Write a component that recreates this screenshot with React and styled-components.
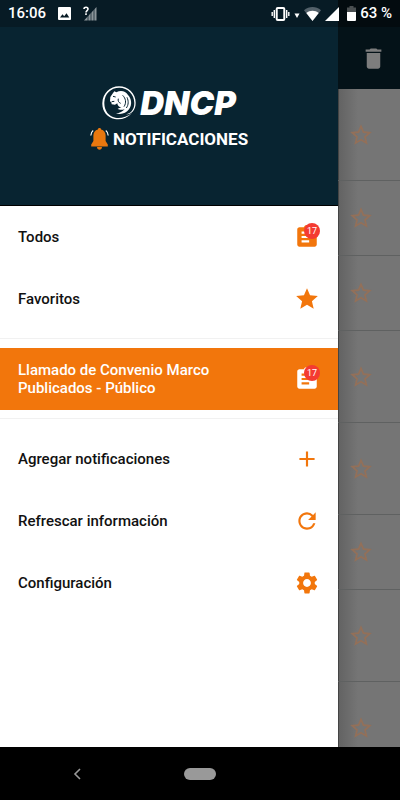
import React from "react";
import styled, { createGlobalStyle, css } from "styled-components";
import {
  MdAdd,
  MdAssignment,
  MdDelete,
  MdRefresh,
  MdSettings,
  MdStar,
  MdStarBorder,
} from "react-icons/md";

const GlobalStyle = createGlobalStyle`
  * {
    box-sizing: border-box;
  }
  body {
    margin: 0;
    background: #000;
    font-family: Roboto, "Liberation Sans", sans-serif;
  }
  button {
    border: 0;
    padding: 0;
    background: none;
    font: inherit;
    color: inherit;
    text-align: left;
    cursor: pointer;
  }
  svg {
    display: block;
    flex: none;
  }
`;

const Screen = styled.div`
  --strip: 62px;
  display: flex;
  flex-direction: column;
  height: 100vh;
  overflow: hidden;
`;

const StatusBar = styled.header`
  display: flex;
  justify-content: space-between;
  flex: none;
  height: 27px;
  padding: 0 8px;
  background: linear-gradient(
    to right,
    #071b25 calc(100% - var(--strip)),
    #030b0f calc(100% - var(--strip))
  );
  color: #fff;
  font-size: 15px;
  font-weight: 500;
  line-height: 27px;
`;

const StatusGroup = styled.div`
  display: flex;
  align-items: center;
  gap: ${(props) => props.$gap}px;
`;

const Body = styled.div`
  display: flex;
  flex: 1;
  min-height: 0;
`;

const Drawer = styled.aside`
  flex: 1;
  min-width: 0;
  background: #fff;
`;

const Brand = styled.div`
  display: flex;
  flex-direction: column;
  align-items: center;
  gap: 7px;
  height: 179px;
  padding-top: 59px;
  background: #082431;
  border-bottom: 1px solid #000;
  color: #fff;
`;

const BrandRow = styled.div`
  display: flex;
  align-items: center;
  gap: 4px;
`;

const BrandName = styled.span`
  font-family: Inter, sans-serif;
  font-size: 33px;
  font-style: italic;
  font-weight: 900;
  line-height: 34px;
`;

const BrandProduct = styled.span`
  font-size: 17px;
  font-weight: 700;
  line-height: 24px;
`;

const Menu = styled.nav`
  display: flex;
  flex-direction: column;
`;

const MenuItem = styled.button`
  display: flex;
  align-items: center;
  justify-content: space-between;
  gap: 48px;
  height: 62px;
  padding: 0 18px;
  font-size: 15px;
  font-weight: 500;
  line-height: 18px;
  color: #111;
  svg {
    color: #f2760c;
  }
  ${(props) =>
    props.$active &&
    css`
      && {
        background: #f2760c;
        color: #fff;
      }
      svg {
        color: #fff;
      }
    `}
`;

const Divider = styled.hr`
  width: 100%;
  height: 1px;
  margin: 8px 0 9px;
  border: 0;
  background: #f1f1f1;
`;

const IconBox = styled.span`
  position: relative;
  flex: none;
`;

const Badge = styled.span`
  position: absolute;
  top: -1px;
  right: 0;
  width: 16px;
  height: 16px;
  border-radius: 50%;
  background: #f43b32;
  color: #fff;
  font-size: 9px;
  font-weight: 400;
  line-height: 16px;
  text-align: center;
`;

const Behind = styled.main`
  flex: none;
  width: var(--strip);
  overflow: hidden;
  background: linear-gradient(to right, #444 1px, #636363 1px, #757575 20px);
`;

const AppBar = styled.div`
  display: flex;
  justify-content: flex-end;
  align-items: center;
  height: 62px;
  padding-right: 13px;
  background: #041218;
  color: #7d7d7d;
`;

const ListRow = styled.div`
  display: flex;
  align-items: center;
  height: ${(props) => (props.$tall ? 92 : 75)}px;
  padding-left: 10px;
  border-bottom: 1px solid #5f6161;
  color: #937059;
`;

const NavBar = styled.footer`
  display: grid;
  grid-template-columns: 1fr auto 1fr;
  align-items: center;
  flex: none;
  height: 53px;
  background: #000;
`;

const BackButton = styled.button`
  justify-self: center;
  margin-right: 30px;
`;

const HomeButton = styled.button`
  width: 32px;
  height: 12px;
  && {
    border-radius: 6px;
    background: #999;
  }
`;

const PictureIcon = () => (
  <svg width="13" height="13" viewBox="0 0 13 13">
    <rect width="13" height="13" rx="1" fill="#fff" />
    <path d="M2 10.5l2.5-3.2 1.7 2 2.3-3 2.8 4.2z" fill="#071b25" />
  </svg>
);

const NoSignalIcon = () => (
  <svg width="14" height="15" viewBox="0 0 14 15">
    <path d="M13.5 1v13.5H1z" fill="#8b959a" />
    <path d="M5 8v7M8 5v10M11 2v13" stroke="#071b25" strokeWidth="0.7" />
    <path d="M0 0h6v9H0z" fill="#071b25" />
    <path
      d="M1 3c0-2.4 4-2.4 4 0 0 1.5-2 1.6-2 3.4M3 7.3v1.6"
      fill="none"
      stroke="#fff"
      strokeWidth="1.6"
    />
  </svg>
);

const VibrateIcon = () => (
  <svg width="19" height="14" viewBox="0 0 18 14">
    <rect x="5.2" y="1" width="7.6" height="12" rx="1" fill="none" stroke="#fff" strokeWidth="2" />
    <path d="M2.8 3v8M15.2 3v8M0.7 5v4M17.3 5v4" stroke="#fff" strokeWidth="1.4" />
  </svg>
);

const DataIcon = () => (
  <svg width="6" height="13" viewBox="0 0 6 13">
    <path d="M0.5 6.5h5L3 11z" fill="#fff" />
  </svg>
);

const WifiIcon = () => (
  <svg width="17" height="14" viewBox="0 0 17 14">
    <path d="M0 3.3C5-1 12-1 17 3.3L8.5 14z" fill="#53616a" />
    <path d="M2.3 6C6 3 11 3 14.7 6L8.5 14z" fill="#fff" />
  </svg>
);

const SignalIcon = () => (
  <svg width="14" height="14" viewBox="0 0 14 14">
    <path d="M14 0v14H0z" fill="#fff" />
  </svg>
);

const BatteryIcon = () => (
  <svg width="9" height="15" viewBox="0 0 9 15">
    <path d="M2.5 0h4v1.5H9V6H0V1.5h2.5z" fill="#4a4f51" />
    <path d="M0 6h9v8a1 1 0 0 1-1 1H1a1 1 0 0 1-1-1z" fill="#fff" />
  </svg>
);

const LionLogo = () => (
  <svg width="34" height="34" viewBox="0 0 102 102">
    {/* ring, open at the lower right */}
    <path
      d="M90 81C76 96 57 103 38 99 15 94 0 75 1 51 2 22 24 1 51 1c28 0 50 22 50 49 0 23-13 35-29 35 16-3 25-16 25-34C97 25 77 5 52 5 26 5 8 24 7 49c-1 24 13 42 33 46 16 3 34-2 50-14z"
      fill="#fff"
    />
    {/* head and mane */}
    <path
      d="M25 33l6-9 6-8 6 3c14-8 28-3 35 8 11 11 13 30 3 43-9 12-24 17-39 12 11-1 20-5 26-13-8 4-16 3-21-1l11-4c-7 0-12-5-12-12l-7 4-10-1-1-6-4-3z"
      fill="#fff"
    />
    <path
      d="M62 28c9 9 12 22 4 34M75 34c5 11 5 22-2 32M33 31l8 2M29 47l8-1M49 38c-2 6 1 12 7 14"
      fill="none"
      stroke="#082431"
      strokeWidth="3"
    />
  </svg>
);

const BellLogo = () => (
  <svg width="19" height="22" viewBox="0 0 19 22">
    <path
      d="M9.5 0c1 0 1.6.6 1.6 1.5 3 .8 4.5 3 4.5 6V13l2.2 3.5v2H1.200v-2L3.400 13V7.500c0-3 1.500-5.200 4.500-6C7.900.6 8.500 0 9.500 0z"
      fill="#ea780f"
    />
    <path d="M7 19h5c0 3.500-5 3.500-5 0z" fill="#ea780f" />
    <path
      d="M3.200 2.500C1.600 3.700 1 5 .8 7.500M15.800 2.500c1.600 1.200 2.200 2.500 2.400 5"
      fill="none"
      stroke="#fff"
      strokeWidth="1.2"
    />
  </svg>
);

const NoteIcon = ({ count }) => (
  <IconBox>
    <MdAssignment size={26} />
    <Badge>{count}</Badge>
  </IconBox>
);

const rows = [true, false, false, true, true, false, true, true];

const App = () => {
  return (
    <Screen>
      <GlobalStyle />
      <StatusBar>
        <StatusGroup $gap={12}>
          <span>16:06</span>
          <PictureIcon />
          <NoSignalIcon />
        </StatusGroup>
        <StatusGroup $gap={8}>
          <StatusGroup $gap={4}>
            <VibrateIcon />
            <DataIcon />
            <WifiIcon />
            <SignalIcon />
          </StatusGroup>
          <StatusGroup $gap={4}>
            <BatteryIcon />
            <span>63 %</span>
          </StatusGroup>
        </StatusGroup>
      </StatusBar>
      <Body>
        <Drawer>
          <Brand>
            <BrandRow>
              <LionLogo />
              <BrandName>DNCP</BrandName>
            </BrandRow>
            <BrandRow>
              <BellLogo />
              <BrandProduct>NOTIFICACIONES</BrandProduct>
            </BrandRow>
          </Brand>
          <Menu>
            <MenuItem>
              Todos
              <NoteIcon count={17} />
            </MenuItem>
            <MenuItem>
              Favoritos
              <MdStar size={26} />
            </MenuItem>
            <Divider />
            <MenuItem $active>
              Llamado de Convenio Marco Publicados - Público
              <NoteIcon count={17} />
            </MenuItem>
            <Divider />
            <MenuItem>
              Agregar notificaciones
              <MdAdd size={26} />
            </MenuItem>
            <MenuItem>
              Refrescar información
              <MdRefresh size={26} />
            </MenuItem>
            <MenuItem>
              Configuración
              <MdSettings size={26} />
            </MenuItem>
          </Menu>
        </Drawer>
        <Behind>
          <AppBar>
            <button aria-label="Eliminar">
              <MdDelete size={27} />
            </button>
          </AppBar>
          {rows.map((tall, i) => (
            <ListRow key={i} $tall={tall}>
              <button aria-label="Favorito">
                <MdStarBorder size={26} />
              </button>
            </ListRow>
          ))}
        </Behind>
      </Body>
      <NavBar>
        <BackButton aria-label="Atrás">
          <svg width="8" height="12" viewBox="0 0 8 12">
            <path d="M7 1L2 6l5 5" fill="none" stroke="#999" strokeWidth="1.6" />
          </svg>
        </BackButton>
        <HomeButton aria-label="Inicio" />
      </NavBar>
    </Screen>
  );
};

export default App;
